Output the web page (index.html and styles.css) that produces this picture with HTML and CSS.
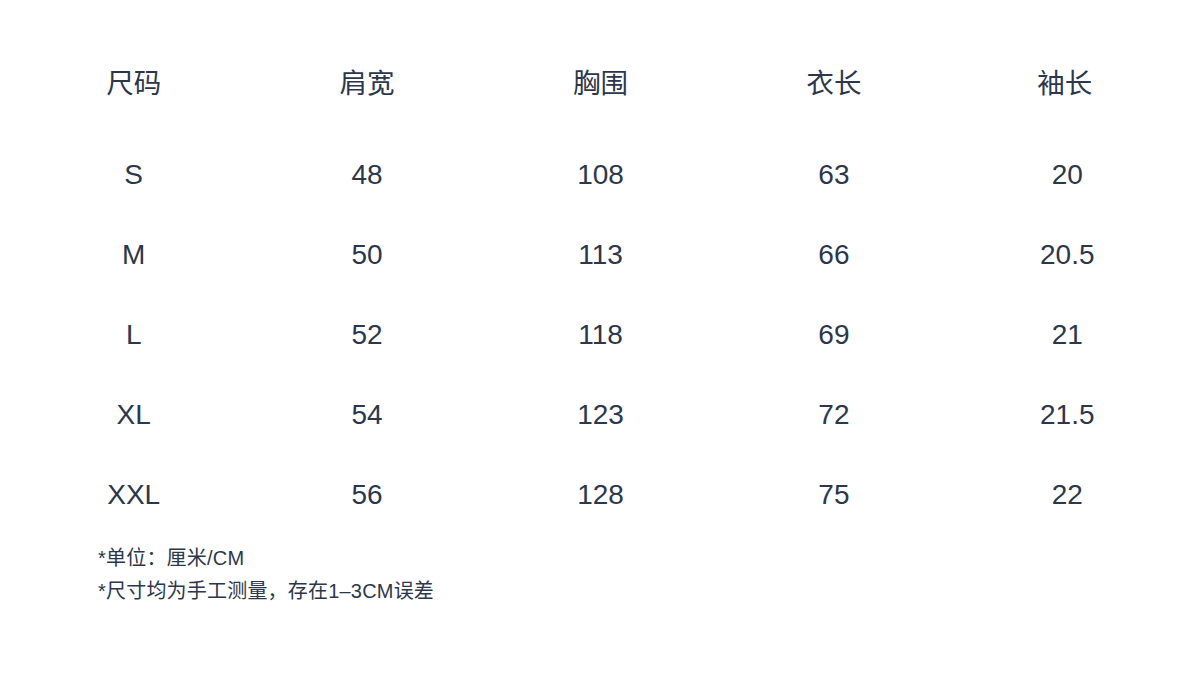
FILE: index.html
```html
<!DOCTYPE html>
<html lang="zh-CN">
<head>
<meta charset="utf-8">
<title>尺码表</title>
<link rel="stylesheet" href="styles.css">
</head>
<body>
<div class="page">
  <div class="table">
    <div class="row head">
      <div class="cell">尺码</div><div class="cell">肩宽</div><div class="cell">胸围</div><div class="cell">衣长</div><div class="cell shift">袖长</div>
    </div>
    <div class="row">
      <div class="cell">S</div><div class="cell">48</div><div class="cell">108</div><div class="cell">63</div><div class="cell">20</div>
    </div>
    <div class="row">
      <div class="cell">M</div><div class="cell">50</div><div class="cell">113</div><div class="cell">66</div><div class="cell">20.5</div>
    </div>
    <div class="row">
      <div class="cell">L</div><div class="cell">52</div><div class="cell">118</div><div class="cell">69</div><div class="cell">21</div>
    </div>
    <div class="row">
      <div class="cell">XL</div><div class="cell">54</div><div class="cell">123</div><div class="cell">72</div><div class="cell">21.5</div>
    </div>
    <div class="row">
      <div class="cell">XXL</div><div class="cell">56</div><div class="cell">128</div><div class="cell">75</div><div class="cell">22</div>
    </div>
  </div>
  <div class="notes">
    <p>*单位：厘米/CM</p>
    <p>*尺寸均为手工测量，存在1–3CM误差</p>
  </div>
</div>
</body>
</html>
```

FILE: styles.css
```css
html, body {
  margin: 0;
  padding: 0;
  background: #ffffff;
}
body {
  font-family: "Liberation Sans", "Noto Sans CJK SC", sans-serif;
  color: #2c374b;
}
.page {
  width: 1200px;
  height: 678px;
  padding-top: 44px;
  box-sizing: border-box;
}
.table {
  margin-left: 17px;
  width: 1167px;
}
.row {
  display: grid;
  grid-template-columns: repeat(5, 1fr);
  height: 80px;
  align-items: center;
  font-size: 28px;
}
.row.head {
  margin-bottom: 11px;
  font-size: 27.5px;
}
.cell {
  text-align: center;
  line-height: 80px;
}
.cell.shift {
  padding-right: 5px;
}
.notes {
  margin-top: 7px;
  padding-left: 98px;
  font-size: 20px;
}
.notes p {
  margin: 0;
  line-height: 33px;
  letter-spacing: 0.2px;
}
```
